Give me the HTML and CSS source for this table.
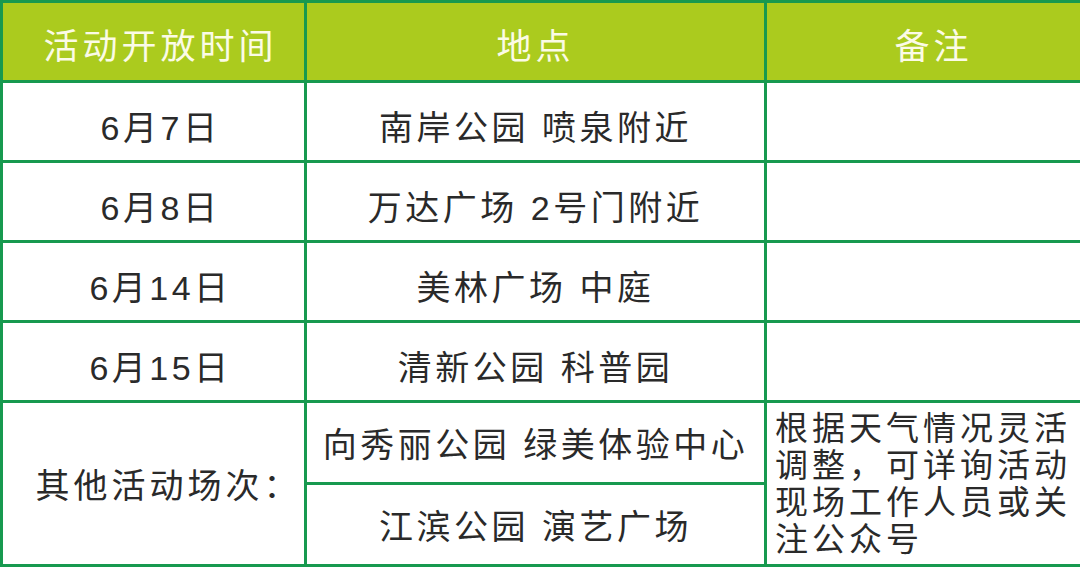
FILE: index.html
```html
<!DOCTYPE html>
<html lang="zh-CN">
<head>
<meta charset="utf-8">
<link rel="stylesheet" href="styles.css">
</head>
<body>
<table class="schedule">
  <colgroup>
    <col class="c1">
    <col class="c2">
    <col class="c3">
  </colgroup>
  <thead>
    <tr class="head">
      <th class="h-time">活动开放时间</th>
      <th>地点</th>
      <th class="h-note">备注</th>
    </tr>
  </thead>
  <tbody>
    <tr class="row date">
      <td>6月7日</td>
      <td>南岸公园 喷泉附近</td>
      <td></td>
    </tr>
    <tr class="row date">
      <td>6月8日</td>
      <td>万达广场 2号门附近</td>
      <td></td>
    </tr>
    <tr class="row date">
      <td>6月14日</td>
      <td>美林广场 中庭</td>
      <td></td>
    </tr>
    <tr class="row date">
      <td>6月15日</td>
      <td>清新公园 科普园</td>
      <td></td>
    </tr>
    <tr class="row extra">
      <td rowspan="2" class="other">其他活动场次：</td>
      <td>向秀丽公园 绿美体验中心</td>
      <td rowspan="2" class="note">根据天气情况灵活调整，可详询活动现场工作人员或关注公众号</td>
    </tr>
    <tr class="row extra">
      <td>江滨公园 演艺广场</td>
    </tr>
  </tbody>
</table>
</body>
</html>
```
FILE: styles.css
```css
html, body {
  margin: 0;
  padding: 0;
  background: #ffffff;
}

.schedule {
  width: 1080px;
  border-collapse: collapse;
  table-layout: fixed;
  font-family: "Liberation Sans", "Noto Sans CJK SC", sans-serif;
  color: #2a2a2a;
}

.c1 { width: 304px; }
.c2 { width: 460px; }
.c3 { width: 316px; }

.schedule th,
.schedule td {
  border: 3px solid #17994f;
  text-align: center;
  vertical-align: middle;
  padding: 0;
}

.head th {
  background: #abcb1e;
  color: #fbfbe6;
  font-weight: normal;
  font-size: 35px;
  letter-spacing: 4px;
  height: 74px;
  padding-top: 3px;
}

.head th.h-time {
  padding-left: 14px;
}

.head th.h-note {
  padding-left: 20px;
}

.row td {
  font-size: 34px;
  letter-spacing: 3.5px;
  height: 77px;
}

.row.extra td {
  height: 79px;
}

.row.date td {
  height: 69px;
  padding-top: 8px;
}

.row.date td:first-child {
  padding-left: 14px;
}

.row td.other {
  padding-left: 30px;
  letter-spacing: 4px;
}

.row td.note {
  text-align: left;
  padding: 0 2px 0 8px;
  font-size: 33px;
  letter-spacing: 4px;
  line-height: 37px;
}
```
